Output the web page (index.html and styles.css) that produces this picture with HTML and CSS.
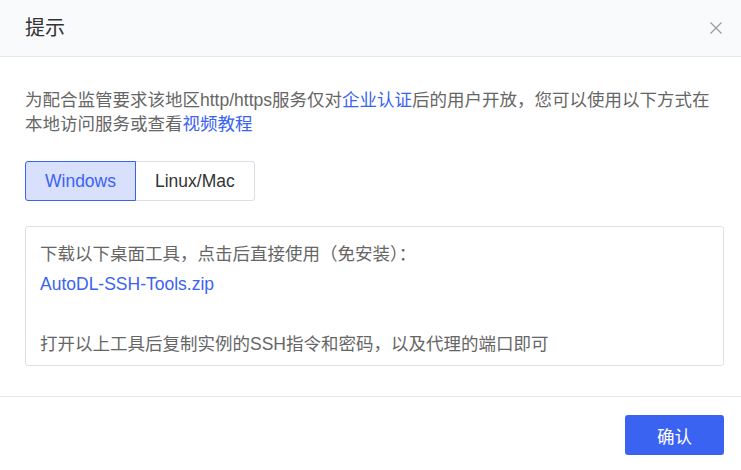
FILE: index.html
```html
<!DOCTYPE html>
<html lang="zh-CN">
<head>
<meta charset="utf-8">
<title>提示</title>
<link rel="stylesheet" href="styles.css">
</head>
<body>
<div class="dialog">
  <div class="dialog-header">
    <span class="dialog-title">提示</span>
    <button class="close-btn" aria-label="关闭">
      <svg width="12" height="12" viewBox="0 0 12 12"><path d="M0.5 0.5L11.5 11.5M11.5 0.5L0.5 11.5" stroke="#9a9a9a" stroke-width="1.2" fill="none"/></svg>
    </button>
  </div>
  <div class="dialog-body">
    <p class="notice">为配合监管要求该地区http/https服务仅对<a class="link" href="#">企业认证</a>后的用户开放，您可以使用以下方式在本地访问服务或查看<a class="link" href="#">视频教程</a></p>
    <div class="tabs">
      <button class="tab tab-active">Windows</button>
      <button class="tab">Linux/Mac</button>
    </div>
    <div class="panel">
      <div class="panel-line">下载以下桌面工具，点击后直接使用（免安装）：</div>
      <div class="panel-line"><a class="link" href="#">AutoDL-SSH-Tools.zip</a></div>
      <div class="panel-line empty">&nbsp;</div>
      <div class="panel-line">打开以上工具后复制实例的SSH指令和密码，以及代理的端口即可</div>
    </div>
  </div>
  <div class="dialog-footer">
    <button class="confirm-btn">确认</button>
  </div>
</div>
</body>
</html>
```
FILE: styles.css
```css
* { box-sizing: border-box; }
html, body { margin: 0; padding: 0; background: #fff; }
body {
  font-family: "Liberation Sans", "Noto Sans CJK SC", sans-serif;
  color: #606266;
}
.dialog { width: 741px; height: 470px; background: #fff; }
.dialog-header {
  height: 57px;
  background: #f9fafc;
  border-bottom: 1px solid #e6e8ee;
  display: flex;
  align-items: center;
  justify-content: space-between;
  padding: 0 19px 0 25px;
}
.dialog-title { font-size: 20px; color: #333; line-height: 24px; }
.close-btn {
  border: 0; background: transparent; padding: 0; width: 12px; height: 12px;
  display: flex; cursor: pointer;
}
.dialog-body { padding: 32px 17px 30px 25px; }
.notice {
  margin: 0;
  font-size: 17.5px;
  line-height: 23.5px;
  color: #666;
}
.link { color: #3b63f2; text-decoration: none; }
.tabs { display: flex; margin-top: 25px; }
.tab {
  font-family: inherit;
  font-size: 17.5px;
  height: 40px;
  padding: 0 19px;
  background: #fff;
  color: #333;
  border: 1px solid #dcdfe6;
  margin: 0;
  cursor: pointer;
}
.tab:first-child { border-radius: 3px 0 0 3px; }
.tab:last-child { border-radius: 0 3px 3px 0; border-left: 0; }
.tab-active {
  background: #d9e0fb;
  color: #3b63f2;
  border-color: #3b63f2;
}
.panel {
  margin-top: 25px;
  border: 1px solid #dcdfe6;
  border-radius: 3px;
  padding: 12px 14px 6px;
  font-size: 17.5px;
  line-height: 30px;
  color: #666;
}
.dialog-footer {
  border-top: 1px solid #e6e8ee;
  padding: 18px 17px 0;
  display: flex;
  justify-content: flex-end;
}
.confirm-btn {
  font-family: inherit;
  width: 99px;
  height: 40px;
  background: #3b63f2;
  color: #fff;
  border: 0;
  border-radius: 3px;
  font-size: 17.5px;
  cursor: pointer;
}
```
